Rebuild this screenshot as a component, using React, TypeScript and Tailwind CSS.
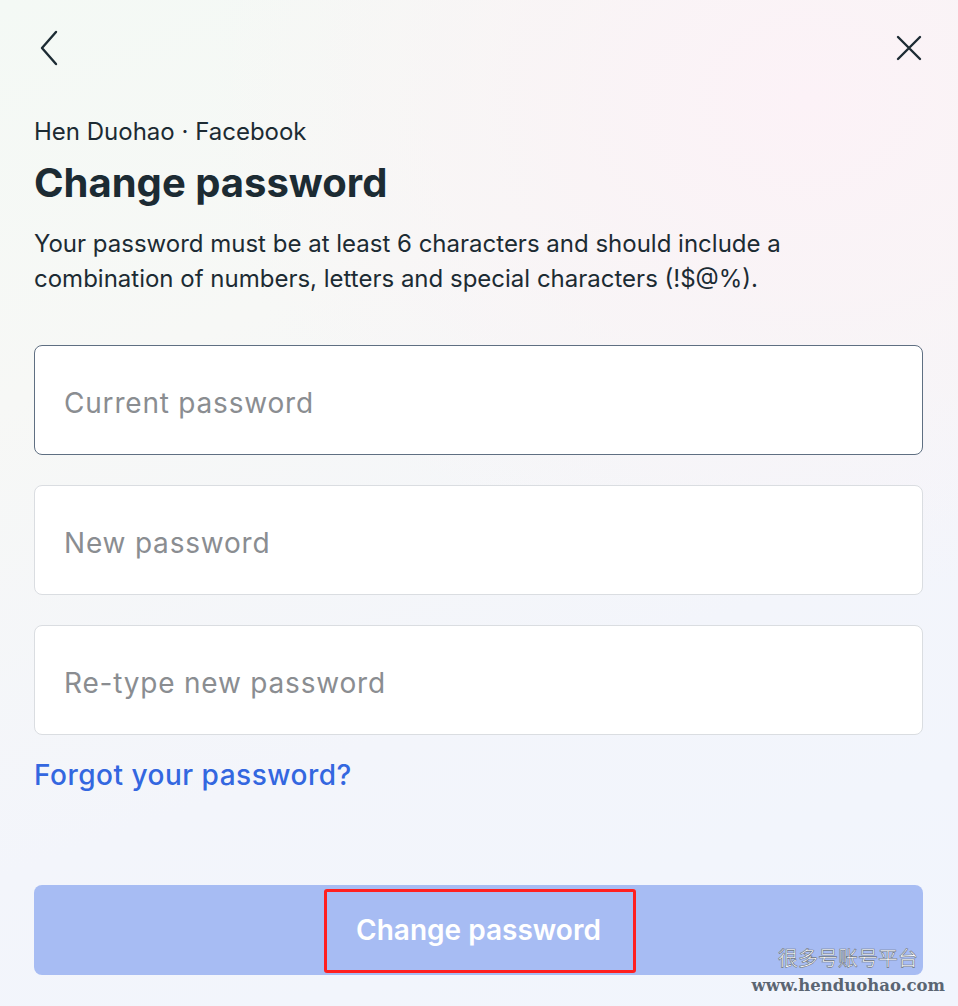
import { useState } from "react";

function BackIcon() {
  return (
    <svg width="22" height="36" viewBox="0 0 22 36" fill="none">
      <path d="M18 2 L4 18 L18 34" stroke="#1c2b33" strokeWidth="2.4" strokeLinecap="round" strokeLinejoin="round" />
    </svg>
  );
}

function CloseIcon() {
  return (
    <svg width="28" height="28" viewBox="0 0 28 28" fill="none">
      <path d="M3 3 L25 25 M25 3 L3 25" stroke="#1c2b33" strokeWidth="2.4" strokeLinecap="round" />
    </svg>
  );
}

export default function App() {
  const [current, setCurrent] = useState("");
  const [next, setNext] = useState("");
  const [retype, setRetype] = useState("");

  const fields = [
    { placeholder: "Current password", value: current, set: setCurrent, focused: true },
    { placeholder: "New password", value: next, set: setNext, focused: false },
    { placeholder: "Re-type new password", value: retype, set: setRetype, focused: false },
  ];

  return (
    <div className="relative w-[958px] h-[1006px] overflow-hidden bg-[linear-gradient(160deg,#f4f9f5_0%,#f7f8f6_30%,#f3f5fb_65%,#f1f5fd_100%)] font-['Inter','Noto_Sans',sans-serif] text-[#1c2b33]">
      {/* soft pink glow in the top right */}
      <div className="absolute right-[-450px] top-[-400px] w-[1200px] h-[1000px] rounded-full bg-[radial-gradient(closest-side,#fcf2f7_0%,#faf3f6cc_40%,transparent_100%)]" />

      <div className="relative flex flex-col h-full pl-[34px] pr-[35px]">
        {/* Header */}
        <div className="flex items-center justify-between h-[96px] pl-[2px]">
          <button className="flex items-center justify-center w-[26px] h-[40px]">
            <BackIcon />
          </button>
          <button className="flex items-center justify-center w-[28px] h-[28px]">
            <CloseIcon />
          </button>
        </div>

        <p className="mt-[20px] text-[24px] leading-[32px]">Hen Duohao · Facebook</p>
        <h1 className="mt-[12px] text-[40px] leading-[46px] font-bold">Change password</h1>
        <p className="mt-[20px] text-[24px] leading-[35px]">
          Your password must be at least 6 characters and should include a combination of numbers, letters and
          special characters (!$@%).
        </p>

        <div className="mt-[49px] flex flex-col gap-[30px]">
          {fields.map((f) => (
            <input
              key={f.placeholder}
              type="password"
              value={f.value}
              onChange={(e) => f.set(e.target.value)}
              placeholder={f.placeholder}
              className={`h-[110px] w-full rounded-[8px] bg-white px-[29px] pt-[6px] text-[28px] tracking-[0.8px] outline-none placeholder:text-[#8a8d91] ${
                f.focused ? "border border-[#5f6f82]" : "border border-[#dadde1]"
              }`}
            />
          ))}
        </div>

        <a href="#" className="mt-[22px] text-[28px] leading-[36px] tracking-[0.5px] font-medium text-[#3367e0]">
          Forgot your password?
        </a>

        <div className="mt-[92px] relative">
          <button className="w-full h-[90px] rounded-[8px] bg-[#a7bcf3] text-white text-[28px] font-semibold">
            Change password
          </button>
          {/* red annotation box */}
          <div className="absolute left-[290px] top-[4px] w-[312px] h-[84px] rounded-[3px] border-[3px] border-[#ff1f1f] pointer-events-none" />
        </div>
      </div>

      {/* watermark */}
      <div className="absolute right-[40px] bottom-[36px] text-[20px] leading-[24px] text-white font-['Noto_Sans_CJK_SC',sans-serif] [-webkit-text-stroke:0.6px_#6b7480]">
        很多号账号平台
      </div>
      <div className="absolute right-[13px] bottom-[10px] text-[16.5px] leading-[20px] font-bold text-[#5b6572] font-['DejaVu_Serif','Liberation_Serif',serif]">
        www.henduohao.com
      </div>
    </div>
  );
}
